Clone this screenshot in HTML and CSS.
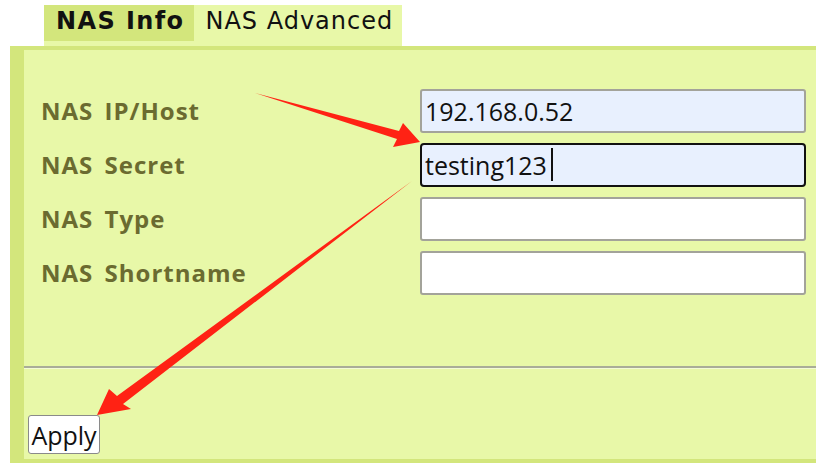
FILE: index.html
```
<!DOCTYPE html>
<html lang="en">
  <head>
    <meta charset="UTF-8" />
    <title>NAS Info</title>
    <link rel="stylesheet" href="styles.css">
  </head>
  <body>
    <!-- Tabs -->
    <div class="tabs">
      <div class="tab active">NAS Info</div>
      <div class="tab">NAS Advanced</div>
    </div>

    <!-- Panel -->
    <div class="panel">
      <div class="fields">
        <label for="ip">NAS IP/Host</label>
        <input type="text" id="ip" class="filled" value="192.168.0.52" />
        <label for="secret">NAS Secret</label>
        <div class="field-wrap">
          <input type="text" id="secret" class="filled focused" value="testing123" />
          <span class="caret"></span>
        </div>
        <label for="type">NAS Type</label>
        <input type="text" id="type" />
        <label for="short">NAS Shortname</label>
        <input type="text" id="short" />
      </div>
      <hr />
      <button class="apply">Apply</button>
    </div>

    <!-- annotation arrows -->
    <svg class="arrows" width="816" height="463" viewBox="0 0 816 463">
      <polygon points="255,93 399,131 403,123 420,142 393,147 397,139" />
      <polygon points="412,181 117,396 109,389 97,415 131,409 123,404" />
    </svg>
  </body>
</html>
```

FILE: styles.css
```
* {
  box-sizing: border-box;
}

body {
  margin: 0;
  background: #fff;
  font-family: "DejaVu Sans", Verdana, sans-serif;
  position: relative;
  width: 816px;
  height: 463px;
  overflow: hidden;
}

.tabs {
  display: flex;
  margin: 5px 0 0 44px;
  width: 358px;
  height: 41px;
  padding-bottom: 5px;
  background: #e8f8a8;
}

.tab {
  height: 36px;
  padding: 0 0 0 11px;
  font-size: 24px;
  line-height: 32px;
  letter-spacing: 1px;
  color: #111;
}

.tab.active {
  padding: 0 10px 0 12px;
  background: #d3e67c;
  font-weight: bold;
  letter-spacing: 1.4px;
}

.panel {
  margin-left: 10px;
  height: 417px;
  background: #e8f8a8;
  border-top: 4px solid #d3e67c;
  border-left: 14px solid #d3e67c;
  border-bottom: 4px solid #d3e67c;
  display: flex;
  flex-direction: column;
}

.fields {
  display: grid;
  grid-template-columns: 379px 386px;
  row-gap: 10px;
  padding: 39px 0 0 17px;
}

.fields label {
  font-family: "Open Sans", "Noto Sans", sans-serif;
  font-weight: bold;
  font-size: 24px;
  color: #6b6b30;
  line-height: 44px;
  letter-spacing: 1px;
  word-spacing: 4px;
}

.fields input {
  width: 386px;
  height: 44px;
  border: 2px solid #a3a39a;
  border-radius: 3px;
  background: #fff;
  padding: 0 3px;
  font-family: "Open Sans", "Noto Sans", sans-serif;
  font-size: 25px;
  color: #111;
  outline: none;
}

.fields input.filled {
  background: #e8f0fe;
}

.fields input.focused {
  border-color: #111;
  border-radius: 4px;
}

.field-wrap {
  position: relative;
}

.caret {
  position: absolute;
  left: 131px;
  top: 5px;
  width: 2px;
  height: 33px;
  background: #111;
}

hr {
  margin: 71px 0 0 0;
  border: none;
  border-top: 2px solid #a9ad98;
  border-bottom: 1px solid #f3fbd6;
}

.apply {
  margin: auto 0 5px 4px;
  align-self: flex-start;
  width: 72px;
  height: 39px;
  padding: 0;
  background: #fff;
  border: 1px solid #8a8a8a;
  border-radius: 3px;
  font-family: "Open Sans", "Noto Sans", sans-serif;
  font-size: 25px;
  color: #111;
}

.arrows {
  position: absolute;
  left: 0;
  top: 0;
  pointer-events: none;
}

.arrows polygon {
  fill: #ff2214;
}
```
